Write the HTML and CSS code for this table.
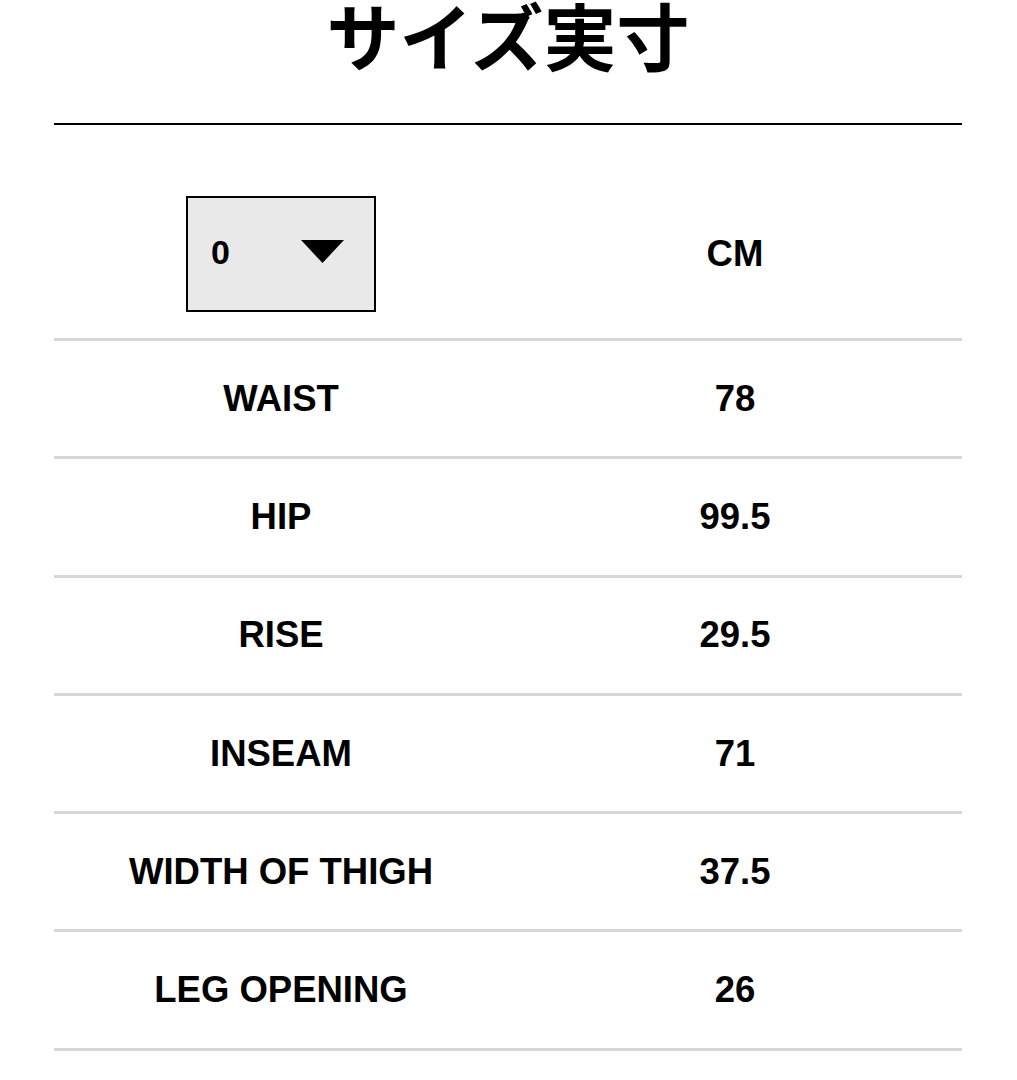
FILE: index.html
```html
<!DOCTYPE html>
<html lang="ja">
<head>
<meta charset="utf-8">
<link rel="stylesheet" href="styles.css">
</head>
<body>
<div class="page">
  <h1 class="title">サイズ実寸</h1>
  <div class="table">
    <div class="row head">
      <div class="cell">
        <div class="select">
          <span class="select-value">0</span>
          <svg class="caret" width="43" height="23" viewBox="0 0 43 23"><polygon points="0,0 43,0 21.5,23" fill="#000"/></svg>
        </div>
      </div>
      <div class="cell">CM</div>
    </div>
    <div class="row"><div class="cell">WAIST</div><div class="cell">78</div></div>
    <div class="row"><div class="cell">HIP</div><div class="cell">99.5</div></div>
    <div class="row"><div class="cell">RISE</div><div class="cell">29.5</div></div>
    <div class="row"><div class="cell">INSEAM</div><div class="cell">71</div></div>
    <div class="row"><div class="cell">WIDTH OF THIGH</div><div class="cell">37.5</div></div>
    <div class="row"><div class="cell">LEG OPENING</div><div class="cell">26</div></div>
  </div>
</div>
</body>
</html>
```

FILE: styles.css
```css
html, body {
  margin: 0;
  padding: 0;
  background: #fff;
}
body {
  font-family: "Liberation Sans", Arial, "Noto Sans CJK JP", sans-serif;
  color: #000;
}
.page {
  width: 908px;
  margin: 0 0 0 54px;
}
.title {
  margin: 0;
  padding: 0 0 56px 0;
  height: 67px;
  font-family: "Noto Sans CJK JP", sans-serif;
  font-weight: 700;
  font-size: 73px;
  line-height: 67px;
  text-align: center;
  border-bottom: 2px solid #000;
}
.table {
  display: flex;
  flex-direction: column;
}
.row {
  display: grid;
  grid-template-columns: 1fr 1fr;
  height: 115.3px;
  border-bottom: 3px solid #d6d6d6;
  align-items: center;
}
.row.head {
  height: auto;
  padding: 71px 0 26px 0;
}
.cell {
  display: flex;
  justify-content: center;
  align-items: center;
  font-weight: 700;
  font-size: 36.5px;
  line-height: 40px;
}
.select {
  box-sizing: border-box;
  width: 190px;
  height: 116px;
  border: 2px solid #000;
  background: #e9e9e9;
  display: flex;
  align-items: center;
  padding: 0 30px 0 23px;
  justify-content: space-between;
}
.select-value {
  font-size: 34px;
  font-weight: 700;
  line-height: 40px;
  margin-top: -4px;
}
.caret {
  display: block;
  margin-top: -6px;
}
```
